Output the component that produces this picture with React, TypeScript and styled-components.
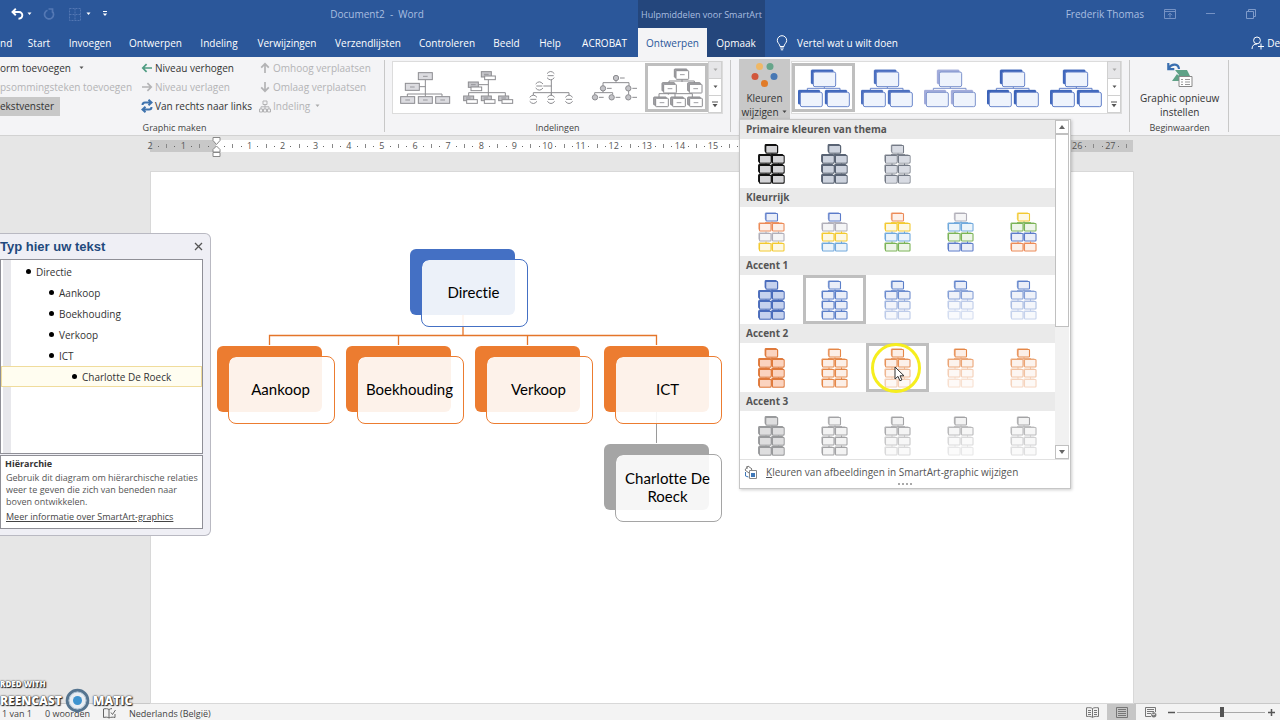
import React from "react";
import styled, { createGlobalStyle } from "styled-components";

const UI = `"Open Sans", "Noto Sans", sans-serif`;

const GlobalStyle = createGlobalStyle`
  *, *::before, *::after { box-sizing: border-box; }
  body { margin: 0; font-family: ${UI}; font-size: 10px; color: #333; overflow: hidden; }
  button { font: inherit; color: inherit; background: none; border: 0; padding: 0; margin: 0; white-space: nowrap; }
  ul { list-style: none; margin: 0; padding: 0; }
  p, h1, h2, h3 { margin: 0; }
  svg { display: block; flex: none; }
`;

/* ---------- application frame ---------- */

const Shell = styled.div`
  display: flex;
  flex-direction: column;
  height: 100vh;
  position: relative;
  overflow: hidden;
`;

const Header = styled.header`
  display: grid;
  grid-template-columns: auto auto 1fr;
  grid-template-rows: 28px 29px;
  background: #2b579a;
  color: #fff;
`;

const TitleArea = styled.div`
  display: flex;
  align-items: center;
  color: #a9bee0;
`;

const QuickAccess = styled.div`
  display: flex;
  align-items: center;
  padding-left: 11px;
  width: 111px;
`;

const DocTitle = styled.h1`
  flex: 1;
  padding-left: 5px;
  font-size: 10px;
  font-weight: 400;
  text-align: center;
`;

const ContextTitle = styled.div`
  display: flex;
  align-items: center;
  justify-content: center;
  background: #24467c;
  color: #a9bee0;
  font-size: 9px;
`;

const WindowArea = styled.div`
  display: flex;
  align-items: center;
  justify-content: flex-end;
  gap: 20px;
  padding-right: 24px;
  color: #a9bee0;
`;

const WindowButtons = styled.div`
  display: flex;
  align-items: center;
  gap: 28px;
`;

const TabList = styled.nav<{ $context?: boolean }>`
  display: flex;
  background: ${(p) => (p.$context ? "#24467c" : "transparent")};
`;

const Tab = styled.button<{ $active?: boolean; $width: number; $cut?: boolean }>`
  width: ${(p) => p.$width}px;
  text-align: ${(p) => (p.$cut ? "left" : "center")};
  background: ${(p) => (p.$active ? "#f4f4f6" : "transparent")};
  color: ${(p) => (p.$active ? "#2b579a" : "#fff")};
`;

const TellArea = styled.div`
  display: flex;
  align-items: center;
  justify-content: space-between;
  padding-left: 11px;
`;

const IconLabel = styled.button`
  display: flex;
  align-items: center;
  gap: 9px;
`;

const ShareButton = styled(IconLabel)`
  gap: 3px;
`;

/* ---------- ribbon ---------- */

const Ribbon = styled.div`
  display: flex;
  height: 79px;
  background: #f4f4f6;
  border-bottom: 1px solid #d2d2d2;
  padding-top: 2px;
  position: relative;
  z-index: 3;
`;

const Group = styled.section<{ $pad: string }>`
  display: flex;
  flex-direction: column;
  justify-content: space-between;
  padding: ${(p) => p.$pad};
  position: relative;
  &::after {
    content: "";
    position: absolute;
    right: 0;
    top: 1px;
    bottom: 3px;
    width: 1px;
    background: #c8c8c8;
  }
`;

const GroupLabel = styled.h2<{ $shift?: number }>`
  font-size: 9px;
  font-weight: 400;
  line-height: 14px;
  text-align: center;
  color: #444;
  padding-right: ${(p) => p.$shift || 0}px;
`;

const GroupBody = styled.div`
  display: flex;
`;

const CommandColumn = styled.div<{ $width: number }>`
  display: flex;
  flex-direction: column;
  align-items: flex-start;
  width: ${(p) => p.$width}px;
`;

const Command = styled.button<{ $muted?: boolean; $pressed?: boolean }>`
  display: flex;
  align-items: center;
  gap: 2px;
  height: 19px;
  padding-bottom: 1px;
  color: ${(p) => (p.$muted ? "#b3b3b5" : "#333")};
  background: ${(p) => (p.$pressed ? "#c8c8c8" : "transparent")};
  padding-right: ${(p) => (p.$pressed ? 6 : 0)}px;
`;

const CommandText = styled.span<{ $gap?: number }>`
  margin-right: ${(p) => p.$gap || 0}px;
`;

const Gallery = styled.div`
  display: flex;
  align-items: center;
  height: 53px;
  margin-top: 2px;
  background: #fff;
  border: 1px solid #dcdcdc;
`;

const Choice = styled.button<{ $selected?: boolean }>`
  display: flex;
  align-items: center;
  justify-content: center;
  width: 63px;
  height: 49px;
  position: relative;
  border: 3px solid ${(p) => (p.$selected ? "#bfbfbf" : "transparent")};
`;

const Stepper = styled.div`
  display: flex;
  flex-direction: column;
  align-self: stretch;
  width: 14px;
`;

const StepButton = styled.button<{ $muted?: boolean }>`
  display: flex;
  align-items: center;
  justify-content: center;
  flex: 1;
  border: 1px solid #d0d0d0;
  margin-top: -1px;
  background: ${(p) => (p.$muted ? "#e6e6e8" : "#fff")};
`;

const BigButton = styled.button<{ $open?: boolean }>`
  display: flex;
  flex-direction: column;
  align-items: center;
  width: ${(p) => (p.$open ? "51px" : "auto")};
  height: 60px;
  padding-top: 3px;
  line-height: 14px;
  background: ${(p) => (p.$open ? "#c8c8c8" : "transparent")};
`;

const BigLine = styled.span`
  display: flex;
  align-items: center;
  gap: 2px;
`;

const BigIcon = styled.span`
  height: 29px;
`;

/* ---------- colour menu ---------- */

const MenuAnchor = styled.div`
  position: relative;
  margin: 0 1px 0 1px;
`;

const Menu = styled.div`
  position: absolute;
  top: 60px;
  left: 0;
  width: 332px;
  background: #fff;
  border: 1px solid #c6c6c6;
  box-shadow: 1px 1px 3px rgba(0, 0, 0, 0.2);
  padding: 0 1px 0 0;
`;

const MenuScroller = styled.div`
  display: flex;
  height: 339px;
`;

const MenuSections = styled.div`
  flex: 1;
  overflow: hidden;
`;

const MenuHeading = styled.h3`
  height: 19px;
  padding-left: 6px;
  background: #eaeaea;
  color: #555;
  font-size: 10px;
  line-height: 19px;
  font-weight: 700;
`;

const SwatchRow = styled.div`
  display: flex;
  height: 49px;
`;

const ScrollBar = styled.div`
  display: flex;
  flex-direction: column;
  width: 14px;
  background: #f1f1f1;
`;

const ScrollPart = styled.button<{ $height?: number; $end?: boolean }>`
  display: flex;
  align-items: center;
  justify-content: center;
  height: ${(p) => p.$height || 14}px;
  margin-top: ${(p) => (p.$end ? "auto" : "0")};
  background: #fff;
  border: 1px solid #c0c0c0;
`;

const MenuFooter = styled.button`
  display: flex;
  align-items: center;
  gap: 9px;
  width: 100%;
  height: 24px;
  padding: 0 0 0 4px;
  color: #555;
  border-top: 1px solid #e1e1e1;
`;

const Grip = styled.div`
  width: 14px;
  height: 5px;
  margin: 0 auto;
  background: radial-gradient(circle at 1px 1px, #aaa 1px, transparent 1px) 0 0 / 4px 6px repeat-x;
`;

const PointerHalo = styled.span`
  position: absolute;
  left: 2px;
  top: -3px;
  width: 50px;
  height: 50px;
  border: 3px solid #f6ee1e;
  border-radius: 50%;
  padding: 20px 0 0 20px;
  z-index: 1;
`;

/* ---------- document area ---------- */

const Workspace = styled.main`
  flex: 1;
  display: flex;
  flex-direction: column;
  min-height: 0;
  position: relative;
  background: #e6e6e6;
`;

const Ruler = styled.div`
  display: flex;
  height: 12px;
  margin: 4px 147px 20px 146px;
  padding-right: 2px;
  font-size: 9px;
  line-height: 12px;
  color: #555;
  background: linear-gradient(
    to right,
    transparent 4px,
    #c8c8c8 4px,
    #c8c8c8 70px,
    #fff 70px,
    #fff calc(100% - 70px),
    #c8c8c8 calc(100% - 70px)
  );
`;

const RulerCell = styled.div<{ $parts: number }>`
  display: flex;
  flex: ${(p) => p.$parts} 1 0;
`;

const RulerMark = styled.span`
  flex: 1 1 0;
  width: 0;
  display: flex;
  justify-content: center;
`;

const RulerTick = styled.i`
  width: 1px;
  height: 4px;
  margin-top: 4px;
  background: #888;
`;

const RulerDot = styled.i`
  width: 1px;
  height: 1px;
  margin-top: 6px;
  background: #666;
`;

const IndentMarker = styled.svg`
  margin-top: -3px;
`;

const Page = styled.article`
  flex: 1;
  margin: 0 147px 0 151px;
  padding: 76px 66px;
  background: #fff;
  outline: 1px solid #d8d8d8;
`;

const Diagram = styled.div`
  position: relative;
  width: 504px;
  height: 274px;
`;

const Node = styled.div<{ $x: number; $y: number; $color: string }>`
  position: absolute;
  left: ${(p) => p.$x}px;
  top: ${(p) => p.$y}px;
  width: 105px;
  height: 66px;
  border-radius: 6px;
  background: ${(p) => p.$color};
`;

const NodeFace = styled.div<{ $color: string }>`
  position: absolute;
  left: 11px;
  top: 10px;
  width: 107px;
  height: 68px;
  padding: 0 2px 2px 0;
  display: flex;
  align-items: center;
  justify-content: center;
  text-align: center;
  border: 1px solid ${(p) => p.$color};
  border-radius: 8px;
  background: rgba(255, 255, 255, 0.9);
  background-clip: padding-box;
  color: #000;
  font-family: Lato, "Open Sans", sans-serif;
  font-variant-ligatures: none;
  font-size: 15px;
  line-height: 18px;
`;

/* ---------- SmartArt text pane ---------- */

const TextPane = styled.aside`
  position: absolute;
  left: 0;
  top: 97px;
  width: 211px;
  padding: 0 7px 6px 0;
  background: #efeff5;
  border: 1px solid #b9b9c2;
  border-left: 0;
  border-radius: 0 6px 6px 0;
`;

const PaneHeader = styled.div`
  display: flex;
  align-items: center;
  justify-content: space-between;
  height: 25px;
`;

const PaneTitle = styled.h2`
  font-family: "Liberation Sans", sans-serif;
  font-size: 13px;
  color: #1f497d;
`;

const Outline = styled.ul`
  height: 195px;
  padding-top: 1px;
  background: linear-gradient(to right, #fff 2px, #e8e8ec 2px, #e8e8ec 10px, #fff 10px);
  border: 1px solid #8f8f96;
`;

const OutlineItem = styled.li<{ $level: number; $active?: boolean }>`
  display: flex;
  align-items: center;
  gap: 5px;
  height: 21px;
  padding-left: ${(p) => 1 + p.$level * 23}px;
  border: 1px solid ${(p) => (p.$active ? "#f0dc9c" : "transparent")};
  background: ${(p) => (p.$active ? "#fffdf0" : "transparent")};
  &::before {
    content: "";
    width: 5px;
    height: 5px;
    border-radius: 50%;
    background: #000;
  }
`;

const PaneInfo = styled.div`
  height: 74px;
  margin-top: 1px;
  padding: 2px 4px;
  background: #fff;
  border: 1px solid #8f8f96;
  font-size: 9px;
  line-height: 12px;
  color: #555;
`;

const InfoTitle = styled.h3`
  font-size: 9px;
  line-height: 12px;
  color: #333;
  margin-bottom: 2px;
`;

const InfoText = styled.p`
  padding-left: 1px;
`;

const InfoLink = styled.a`
  display: inline-block;
  margin: 3px 0 0 1px;
  color: #444;
  text-decoration: underline;
`;

/* ---------- status bar ---------- */

const StatusBar = styled.footer`
  display: flex;
  align-items: stretch;
  justify-content: space-between;
  height: 17px;
  background: #f3f3f3;
  border-top: 1px solid #c8c8c8;
  font-size: 9px;
  color: #444;
`;

const StatusSide = styled.div<{ $gap: number }>`
  display: flex;
  align-items: center;
  gap: ${(p) => p.$gap}px;
  padding: 2px 3px 0 2px;
`;

const ViewSide = styled(StatusSide)`
  padding-top: 0;
`;

const ViewButton = styled.button<{ $active?: boolean }>`
  display: flex;
  align-items: center;
  justify-content: center;
  align-self: stretch;
  width: 29px;
  background: ${(p) => (p.$active ? "#c6c6c6" : "transparent")};
`;

const ZoomButton = styled.button`
  display: flex;
  align-items: center;
  justify-content: center;
  width: 12px;
  height: 12px;
`;

const ZoomSlider = styled.input`
  appearance: none;
  width: 88px;
  height: 12px;
  margin: 0;
  background: linear-gradient(#a8a8a8, #a8a8a8) center / 100% 1px no-repeat;
  &::-webkit-slider-thumb {
    appearance: none;
    width: 4px;
    height: 10px;
    background: #555;
  }
`;

const Watermark = styled.div`
  position: absolute;
  left: 0;
  bottom: 7px;
  z-index: 5;
  color: #fff;
  font-family: "Open Sans", sans-serif;
  font-weight: 800;
  text-shadow: 1px 1px 1px #222, 0 0 2px #333, 0 0 1px #333;
`;

const MarkSmall = styled.div`
  font-size: 8px;
  line-height: 10px;
`;

const MarkLarge = styled.div`
  display: flex;
  align-items: center;
  gap: 3px;
  height: 26px;
  margin-top: -2px;
  font-size: 12px;
`;

/* ---------- drawings ---------- */

const Caret = ({ color = "#555" }: { color?: string }) => (
  <svg width="11" height="4" viewBox="0 0 11 4"><path d="M3.5 .5h4L5.5 3z" fill={color} /></svg>
);

const Up = () => <svg width="8" height="6" viewBox="0 0 8 6"><path d="M1 5h6L4 1z" fill="#666" /></svg>;
const Down = () => <svg width="8" height="6" viewBox="0 0 8 6"><path d="M1 1h6L4 5z" fill="#666" /></svg>;

const Arrow = ({ turn, color }: { turn: number; color: string }) => (
  <svg width="12" height="12" viewBox="0 0 12 12">
    <path transform={`rotate(${turn} 6 6)`} d="M11 6H2M5.6 2.2 1.8 6l3.8 3.8" fill="none" stroke={color} strokeWidth="1.7" />
  </svg>
);

const SwapIcon = () => (
  <svg width="12" height="14" viewBox="0 0 12 14">
    <path d="M1.5 6C1.500 4 2.500 3.500 4 3.500h6.500M7.500 .8l3 2.700-3 2.700" fill="none" stroke="#3f73ad" strokeWidth="2" />
    <path d="M10.500 8c0 2-1 2.500-2.500 2.500H1.500M4.500 7.800l-3 2.700 3 2.700" fill="none" stroke="#3f73ad" strokeWidth="2" />
  </svg>
);

const TreeIcon = () => (
  <svg width="12" height="13" viewBox="0 0 12 13" fill="none" stroke="#b3b3b5">
    <path d="M4 1h4v3.500H4zM.5 9h3v3h-3zM4.500 9h3v3h-3zM8.500 9h3v3h-3zM6 4.500V9M2 9V6.800h8V9" />
  </svg>
);

type Rect = [number, number, number, number];
const Boxes = ({ list, fill, stroke, width = 3, r = 2 }: { list: Rect[]; fill: string; stroke: string; width?: number; r?: number }) => (
  <>
    {list.map(([x, y, w, h], i) => (
      <rect key={i} x={x} y={y} width={w} height={h} rx={r} fill={fill} stroke={stroke} strokeWidth={width} />
    ))}
  </>
);

const G = "#8c8c90";
const Dashes = ({ at }: { at: [number, number][] }) => (
  <path d={at.map(([x, y]) => `M${x - 7} ${y}h14`).join("")} stroke={G} strokeWidth="2.500" fill="none" />
);

const layoutArt = [
  <>
    <path d="M79 35v50M61 56h18M25 86v-8h104v8" fill="none" stroke={G} strokeWidth="3" />
    <Boxes list={[[58, 14, 42, 21], [19, 46, 42, 21], [5, 86, 42, 20], [58, 86, 42, 20], [110, 86, 42, 20]]} fill="#dcdce0" stroke={G} r={0} />
    <Dashes at={[[79, 25], [40, 57], [26, 96], [79, 96], [131, 96]]} />
  </>,
  <>
    <path d="M79 24v60M50 50h29M20 84v-10h110v10" fill="none" stroke={G} strokeWidth="3" />
    <Boxes list={[[58, 11, 30, 16], [19, 42, 30, 16], [5, 84, 30, 14], [58, 84, 30, 14], [110, 84, 30, 14]]} fill="#c4c4c8" stroke={G} r={0} />
    <Boxes list={[[68, 24, 32, 11], [27, 57, 32, 11], [14, 95, 32, 11], [67, 95, 32, 11], [120, 95, 32, 11]]} fill="#fff" stroke={G} r={0} />
    <Dashes at={[[73, 19], [34, 50], [19, 90], [72, 90], [125, 90]]} />
  </>,
  <>
    <path d="M79 36v46M55 54h24M25 82v-8h107v8M79 74v8" fill="none" stroke={G} strokeWidth="3" />
    {([[77, 23], [43, 54], [25, 94], [78, 94], [132, 94]] as [number, number][]).map(([x, y], i) => (
      <path key={i} d={`M${x - 11} ${y - 6}q11-13 22 0M${x - 11} ${y + 6}q11 13 22 0M${x - 9} ${y}h18`} fill="none" stroke={G} strokeWidth="3" />
    ))}
  </>,
  <>
    <path d="M84 38v6M45 54V44h78v10M45 68v6M20 80v-6h54v6M122 68v12" fill="none" stroke={G} strokeWidth="3" />
    {([[84, 30], [45, 61], [121, 61], [21, 88], [71, 88], [121, 88]] as [number, number][]).map(([x, y], i) => (
      <g key={i} stroke={G} strokeWidth="3"><circle cx={x} cy={y} r="8" fill="#c4c4c8" /><path d={`M${x + 12} ${y}h14`} /></g>
    ))}
  </>,
  <>
    <path d="M93 34v8M54 46v-7h76v7M24 87v-10h100v10M72 77v10M52 76v4" fill="none" stroke={G} strokeWidth="3" />
    <Boxes list={[[70, 3, 38, 25], [33, 44, 38, 25], [110, 44, 38, 25], [8, 87, 38, 24], [59, 87, 38, 24], [110, 87, 38, 24]]} fill="#a4a4a8" stroke={G} />
    <Boxes list={[[75, 8, 38, 26], [38, 49, 38, 26], [115, 49, 38, 26], [14, 91, 38, 25], [65, 91, 38, 25], [116, 91, 38, 25]]} fill="#fff" stroke={G} />
    <Dashes at={[[94, 20], [57, 62], [134, 62], [33, 104], [84, 104], [135, 104]]} />
  </>,
];

const StyleArt = ({ back, line }: { back: string; line: string }) => (
  <svg width="52" height="40" viewBox="2 2 156 120">
    <path d="M81 58v5M30 68v-5h98v5" fill="none" stroke={line} strokeWidth="3" />
    <Boxes list={[[41, 7, 67, 43], [2, 68, 66, 43], [83, 68, 66, 43]]} fill={back} stroke={back} r={4} width={1} />
    <Boxes list={[[48, 14, 67, 44], [9, 75, 66, 43], [90, 75, 66, 43]]} fill="#eef3fc" stroke={line} r={5} />
  </svg>
);

interface Swatch { edge: string[]; fill: string; heavy?: boolean; fade?: number[] }

const SwatchArt = ({ edge, fill, heavy, fade = [1, 1, 1, 1] }: Swatch) => {
  const rows: [number, number[]][] = [[2.5, [8]], [12.5, [1.5, 14.5]], [22.5, [1.5, 14.5]], [32.5, [1.5, 14.5]]];
  return (
    <svg width="28" height="42" viewBox="0 0 28 42">
      {rows.map(([y, xs], r) => {
        const c = edge[r % edge.length];
        return (
          <g key={r} opacity={fade[r]} stroke={c}>
            {r === 1 && <path d="M7 11.700h14M14 10.500v1.500" fill="none" />}
            {r > 1 && <path d={`M8 ${y - 2}v2M20.500 ${y - 2}v2`} fill="none" />}
            {xs.map((x) => (
              <g key={x}>
                <rect x={x - 0.8} y={y - 0.8} width="11" height="7" rx=".8" fill={c} strokeWidth={heavy ? 1.2 : 0.4} fillOpacity={heavy ? 1 : 0.7} />
                <rect x={x} y={y} width="11.500" height="7.500" rx=".8" fill="#fff" strokeWidth={heavy ? 1.4 : 1.1} />
                <rect x={x + 0.5} y={y + 0.5} width="10.500" height="6.500" rx=".6" fill={fill === "tint" ? c : fill} fillOpacity={fill === "tint" ? 0.13 : 1} stroke="none" />
              </g>
            ))}
          </g>
        );
      })}
    </svg>
  );
};

const B = "#5b7bc9", O = "#ec8a57", A = "#b0aeb8", Y = "#f3c92f", L = "#6fa8dc", V = "#7ab356";

const accent = (c: string, deep: string, fill: string): Swatch[] => [
  { edge: [deep], fill, heavy: true },
  { edge: [c], fill: "tint" },
  { edge: [c], fill: "tint", fade: [1, 0.9, 0.6, 0.4] },
  { edge: [c], fill: "tint", fade: [1, 0.75, 0.4, 0.25] },
  { edge: [c], fill: "tint", fade: [1, 0.75, 0.5, 0.35] },
];

const menuData: { title: string; items: Swatch[]; selected?: number; hovered?: number }[] = [
  {
    title: "Primaire kleuren van thema",
    items: [
      { edge: ["#111"], fill: "#d3d3d6", heavy: true },
      { edge: ["#5a6474"], fill: "#cdd3de", heavy: true },
      { edge: ["#747a86"], fill: "#d8dbe3" },
    ],
  },
  {
    title: "Kleurrijk",
    items: [
      { edge: [B, O, A, Y], fill: "tint" },
      { edge: [B, A, Y, L], fill: "tint" },
      { edge: [O, Y, L, V], fill: "tint" },
      { edge: [A, L, V, B], fill: "tint" },
      { edge: [Y, V, B, O], fill: "tint" },
    ],
  },
  { title: "Accent 1", items: accent("#5b7fc9", "#4a6cbb", "#c6d2ee"), selected: 1 },
  { title: "Accent 2", items: accent("#e58748", "#df7a3c", "#fbd3bf"), hovered: 2 },
  { title: "Accent 3", items: accent("#a3a3a5", "#999a9c", "#dededf") },
];

const Pointer = () => (
  <svg width="12" height="17" viewBox="0 0 12 17">
    <path d="M1 1v12l3-2.600 1.900 4.400 2-.9L6 9.800h4z" fill="#fff" stroke="#333" strokeWidth="1" />
  </svg>
);

/* ---------- data ---------- */

const tabs: [string, number][] = [
  ["nd", 19], ["Start", 40], ["Invoegen", 62], ["Ontwerpen", 69], ["Indeling", 58], ["Verwijzingen", 78],
  ["Verzendlijsten", 84], ["Controleren", 74], ["Beeld", 45], ["Help", 42], ["ACROBAT", 67],
];

const rulerNumbers = ["2", "1", "", ...Array.from({ length: 27 }, (_, i) => String(i + 1))];

const outline: [string, number][] = [
  ["Directie", 1], ["Aankoop", 2], ["Boekhouding", 2], ["Verkoop", 2], ["ICT", 2], ["Charlotte De Roeck", 3],
];

const nodes = [
  { text: "Directie", x: 193, y: 1, color: "#4470c4" },
  { text: "Aankoop", x: 0, y: 98, color: "#ec7c30" },
  { text: "Boekhouding", x: 129, y: 98, color: "#ec7c30" },
  { text: "Verkoop", x: 258, y: 98, color: "#ec7c30" },
  { text: "ICT", x: 387, y: 98, color: "#ec7c30" },
  { text: "Charlotte De Roeck", x: 387, y: 196, color: "#a5a5a5" },
];

const galleryStyles = [
  { back: "#4068bd", line: "#6a86cb" },
  { back: "#4b6fc0", line: "#6a86cb" },
  { back: "#a3addb", line: "#7c92cc" },
  { back: "#3a62b8", line: "#6a86cb" },
  { back: "#4068bd", line: "#5f7ec8" },
];

const GalleryStepper = () => (
  <Stepper>
    <StepButton $muted aria-label="Vorige rij"><Caret color="#aaa" /></StepButton>
    <StepButton aria-label="Volgende rij"><Caret /></StepButton>
    <StepButton aria-label="Meer">
      <svg width="8" height="7" viewBox="0 0 8 7"><path d="M1 .5h6v1H1zM1.500 3h5L4 6.200z" fill="#555" /></svg>
    </StepButton>
  </Stepper>
);

export default function App() {
  return (
    <Shell>
      <GlobalStyle />
      <Header>
        <TitleArea>
          <QuickAccess>
            <IconLabel aria-label="Ongedaan maken">
              <svg width="13" height="12" viewBox="0 0 13 12"><path d="M4.800 .8 1.500 4l3.300 3.200M2 4h6c4.500 0 4.500 6.500-.5 6.800" fill="none" stroke="#fff" strokeWidth="1.900" /></svg>
            </IconLabel>
            <Caret color="#fff" />
            <svg width="29" height="12" viewBox="0 0 29 12"><path d="M12.500 2.200A4.500 4.500 0 1 0 17 3M13.500 1h4v4" fill="none" stroke="#5478b4" strokeWidth="1.700" /></svg>
            <svg width="19" height="13" viewBox="0 0 19 13"><path d="M5.500 .5h11v12h-11zM5.500 6.500h11M11 .5v12" fill="none" stroke="#5276b2" strokeDasharray="2 1" /></svg>
            <Caret color="#fff" />
            <svg width="20" height="8" viewBox="0 0 20 8"><path d="M9 1h4v1H9zM8.800 3.500h4.400L11 6z" fill="#fff" /></svg>
          </QuickAccess>
          <DocTitle>Document2 &nbsp;-&nbsp; Word</DocTitle>
        </TitleArea>
        <ContextTitle>Hulpmiddelen voor SmartArt</ContextTitle>
        <WindowArea>
          <span>Frederik Thomas</span>
          <WindowButtons>
            <button aria-label="Weergaveopties voor lint">
              <svg width="12" height="10" viewBox="0 0 12 10"><path d="M.5 .5h11v9H.5zM.5 2.500h11M6 8.500v-4M4 6.200l2-2 2 2" fill="none" stroke="#7592c4" /></svg>
            </button>
            <button aria-label="Minimaliseren">
              <svg width="14" height="10" viewBox="0 0 14 10"><path d="M2 4.500h9" stroke="#7592c4" /></svg>
            </button>
            <button aria-label="Verkleinen">
              <svg width="10" height="10" viewBox="0 0 10 10"><path d="M.5 2.500h7v7h-7zM2.500 2.500v-2h7v7h-2" fill="none" stroke="#7f9bca" /></svg>
            </button>
          </WindowButtons>
        </WindowArea>
        <TabList>
          {tabs.map(([t, w], i) => <Tab key={t} $width={w} $cut={i === 0}>{t}</Tab>)}
        </TabList>
        <TabList $context>
          <Tab $active $width={69}>Ontwerpen</Tab>
          <Tab $width={58}>Opmaak</Tab>
        </TabList>
        <TellArea>
          <IconLabel>
            <svg width="12" height="16" viewBox="0 0 12 16"><path d="M4 11.500C4 9 1.300 8.200 1.300 5.400a4.700 4.700 0 0 1 9.400 0C10.700 8.200 8 9 8 11.500zM4.200 13h3.600M4.800 14.800h2.400" fill="none" stroke="#fff" /></svg>
            Vertel wat u wilt doen
          </IconLabel>
          <ShareButton>
            <svg width="13" height="14" viewBox="0 0 13 14"><path d="M6 1a3.300 3.300 0 1 1 0 6.800A3.300 3.300 0 0 1 6 1M1 13c0-3.500 2-5 5-5M10 7.500v6M7 10.500h6" fill="none" stroke="#fff" /></svg>
            De
          </ShareButton>
        </TellArea>
      </Header>

      <Ribbon>
        <Group $pad="0 4px 0 0">
          <GroupBody>
            <CommandColumn $width={141}>
              <Command><CommandText $gap={3}>orm toevoegen</CommandText><Caret /></Command>
              <Command $muted>psommingsteken toevoegen</Command>
              <Command $pressed>ekstvenster</Command>
            </CommandColumn>
            <CommandColumn $width={118}>
              <Command><Arrow turn={0} color="#4f9c82" />Niveau verhogen</Command>
              <Command $muted><Arrow turn={180} color="#b3b3b5" />Niveau verlagen</Command>
              <Command><SwapIcon />Van rechts naar links</Command>
            </CommandColumn>
            <CommandColumn $width={122}>
              <Command $muted><Arrow turn={90} color="#b3b3b5" />Omhoog verplaatsen</Command>
              <Command $muted><Arrow turn={270} color="#b3b3b5" />Omlaag verplaatsen</Command>
              <Command $muted><TreeIcon />Indeling<Caret color="#aaa" /></Command>
            </CommandColumn>
          </GroupBody>
          <GroupLabel $shift={32}>Graphic maken</GroupLabel>
        </Group>

        <Group $pad="0 8px 0 7px">
          <Gallery>
            {layoutArt.map((art, i) => (
              <Choice key={i} $selected={i === 4} aria-label={`Indeling ${i + 1}`}>
                <svg width="52" height="40" viewBox="0 0 156 120">{art}</svg>
              </Choice>
            ))}
            <GalleryStepper />
          </Gallery>
          <GroupLabel>Indelingen</GroupLabel>
        </Group>

        <Group $pad="0 8px 0 7px">
          <GroupBody>
            <MenuAnchor>
              <BigButton $open>
                <BigIcon>
                  <svg width="27" height="27" viewBox="0 0 27 27">
                    <circle cx="8.500" cy="4.500" r="3.500" fill="#efb866" /><circle cx="19" cy="4.500" r="3.500" fill="#66a58a" />
                    <circle cx="4" cy="14.500" r="3.500" fill="#d1573d" /><circle cx="23" cy="14.500" r="3.500" fill="#4878b4" />
                    <circle cx="13.500" cy="21.500" r="3.500" fill="#e17b28" />
                  </svg>
                </BigIcon>
                <BigLine>Kleuren</BigLine>
                <BigLine>wijzigen<svg width="7" height="4" viewBox="0 0 7 4"><path d="M1.500 .5h4L3.500 3z" fill="#444" /></svg></BigLine>
              </BigButton>
              <Menu>
                <MenuScroller>
                  <MenuSections>
                    {menuData.map((s) => (
                      <section key={s.title}>
                        <MenuHeading>{s.title}</MenuHeading>
                        <SwatchRow>
                          {s.items.map((it, i) => (
                            <Choice key={i} $selected={i === s.selected || i === s.hovered} aria-label={`${s.title} ${i + 1}`}>
                              <SwatchArt {...it} />
                              {i === s.hovered && <PointerHalo><Pointer /></PointerHalo>}
                            </Choice>
                          ))}
                        </SwatchRow>
                      </section>
                    ))}
                  </MenuSections>
                  <ScrollBar>
                    <ScrollPart aria-label="Omhoog"><Up /></ScrollPart>
                    <ScrollPart $height={193} aria-label="Schuifblok" />
                    <ScrollPart $end aria-label="Omlaag"><Down /></ScrollPart>
                  </ScrollBar>
                </MenuScroller>
                <MenuFooter>
                  <svg width="13" height="14" viewBox="0 0 13 14">
                    <path d="M1 5l3-4 4 3-3 4zM3 1v3" fill="#fff" stroke="#777" />
                    <path d="M5.500 5.500h7v8h-7z" fill="#fff" stroke="#888" /><path d="M7 8h4v4H7z" fill="#3f78b8" /><path d="M1.500 7v4l3 1" fill="none" stroke="#3f78b8" />
                  </svg>
                  <span><u>K</u>leuren van afbeeldingen in SmartArt-graphic wijzigen</span>
                </MenuFooter>
                <Grip />
              </Menu>
            </MenuAnchor>
            <Gallery>
              {galleryStyles.map((s, i) => (
                <Choice key={i} $selected={i === 0} aria-label={`Stijl ${i + 1}`}>
                  <StyleArt {...s} />
                </Choice>
              ))}
              <GalleryStepper />
            </Gallery>
          </GroupBody>
        </Group>

        <Group $pad="0 10px 0 10px">
          <BigButton>
            <BigIcon>
              <svg width="26" height="26" viewBox="0 0 26 26">
                <path d="M8 8h12l4 8H8l4-3zM5 19l5-7 6 7z" fill="#5fa287" />
                <path d="M12 14.500h13v10H12z" fill="#fff" stroke="#888" /><path d="M14 17.500h2M18 17.500h5M14 20h2M18 20h5M14 22.500h2M18 22.500h5" stroke="#999" />
                <path d="M12 7C11.500 1.500 5 1 1.800 6M1.300 1v6.200h6" fill="none" stroke="#3a6fb0" strokeWidth="2.200" />
              </svg>
            </BigIcon>
            <BigLine>Graphic opnieuw</BigLine>
            <BigLine>instellen</BigLine>
          </BigButton>
          <GroupLabel>Beginwaarden</GroupLabel>
        </Group>
      </Ribbon>

      <Workspace>
        <Ruler>
          {rulerNumbers.map((n, i) => {
            const last = i === rulerNumbers.length - 1;
            return (
              <RulerCell key={i} $parts={last ? 3 : 4}>
                <RulerMark>
                  {n || (
                    <IndentMarker width="9" height="21" viewBox="0 0 9 21">
                      <path d="M1 .5h7v3L4.500 7.500 1 3.500zM1 15v-2.500L4.500 9 8 12.500V15zM1 15.500h7v4H1z" fill="#fff" stroke="#888" />
                    </IndentMarker>
                  )}
                </RulerMark>
                <RulerMark><RulerDot /></RulerMark>
                <RulerMark><RulerTick /></RulerMark>
                {!last && <RulerMark><RulerDot /></RulerMark>}
              </RulerCell>
            );
          })}
        </Ruler>

        <Page>
          <Diagram>
            <svg width="504" height="274" viewBox="0 0 504 274" fill="none">
              <path d="M246 66v22M52.500 97v-9.500h387V97M181.500 87.500V97M310.500 87.500V97" stroke="#e4752a" strokeWidth="1.300" />
              <path d="M439.500 164v31" stroke="#9a9a9a" />
            </svg>
            {nodes.map((n) => (
              <Node key={n.text} $x={n.x} $y={n.y} $color={n.color}>
                <NodeFace $color={n.color}>{n.text}</NodeFace>
              </Node>
            ))}
          </Diagram>
        </Page>

        <TextPane>
          <PaneHeader>
            <PaneTitle>Typ hier uw tekst</PaneTitle>
            <button aria-label="Sluiten">
              <svg width="9" height="9" viewBox="0 0 9 9"><path d="M1 1l7 7M8 1L1 8" stroke="#555" strokeWidth="1.300" /></svg>
            </button>
          </PaneHeader>
          <Outline>
            {outline.map(([t, l]) => <OutlineItem key={t} $level={l} $active={l === 3}>{t}</OutlineItem>)}
          </Outline>
          <PaneInfo>
            <InfoTitle>Hiërarchie</InfoTitle>
            <InfoText>Gebruik dit diagram om hiërarchische relaties weer te geven die zich van beneden naar boven ontwikkelen.</InfoText>
            <InfoLink href="#info">Meer informatie over SmartArt-graphics</InfoLink>
          </PaneInfo>
        </TextPane>
      </Workspace>

      <StatusBar>
        <StatusSide $gap={13}>
          <span>1 van 1</span>
          <span>0 woorden</span>
          <svg width="13" height="11" viewBox="0 0 13 11"><path d="M6 1.500C4.500 .5 2.500 .5 .5 1v8.500c2-.5 4-.5 5.500.5zM6 1.500C7 .8 8 .6 9 .6M6 10c2-1 4-1 6-.5V6M8 4.500l1.500 2L12.500 2" fill="none" stroke="#666" /></svg>
          <span>Nederlands (België)</span>
        </StatusSide>
        <ViewSide $gap={0}>
          <ViewButton aria-label="Leesmodus">
            <svg width="13" height="11" viewBox="0 0 13 11"><path d="M6.500 1.500C5 .5 3 .5 .5 .8v8.700c2.500-.3 4.500 0 6 .8 1.500-.8 3.500-1.100 6-.8V.8C10 .5 8 .5 6.500 1.500zM6.500 1.500v9M2 3.500h3M2 5.500h3M2 7.500h3M8 3.500h3M8 5.500h3M8 7.500h3" fill="none" stroke="#777" /></svg>
          </ViewButton>
          <ViewButton $active aria-label="Afdrukweergave">
            <svg width="12" height="11" viewBox="0 0 12 11"><path d="M.5 .5h11v10H.5zM2 2.500h8M2 4.500h8M2 6.500h8M2 8.500h8" fill="none" stroke="#777" /></svg>
          </ViewButton>
          <ViewButton aria-label="Weblay-out">
            <svg width="12" height="11" viewBox="0 0 12 11"><path d="M6 9.500H.5v-9h10V5M2 2.500h7M2 4.500h7M2 6.500h4" fill="none" stroke="#777" /><circle cx="8.800" cy="7.800" r="2.600" fill="#777" /><path d="M7 7l2 1 1-1.500" stroke="#eee" fill="none" /></svg>
          </ViewButton>
          <ZoomButton aria-label="Uitzoomen">
            <svg width="7" height="7" viewBox="0 0 7 7"><path d="M0 3.500h7" stroke="#555" strokeWidth="1.500" /></svg>
          </ZoomButton>
          <ZoomSlider type="range" min={0} max={100} defaultValue={51} aria-label="Zoomen" />
          <ZoomButton aria-label="Inzoomen">
            <svg width="7" height="7" viewBox="0 0 7 7"><path d="M0 3.500h7M3.500 0v7" stroke="#555" strokeWidth="1.500" /></svg>
          </ZoomButton>
        </ViewSide>
      </StatusBar>

      <Watermark>
        <MarkSmall>RDED WITH</MarkSmall>
        <MarkLarge>
          REENCAST
          <svg width="25" height="25" viewBox="0 0 25 25">
            <circle cx="12.500" cy="12.500" r="10.300" fill="#e8edf2" stroke="#55748f" strokeWidth="3" />
            <circle cx="12.500" cy="12.500" r="8.500" fill="none" stroke="#a9c0d2" strokeWidth="1" />
            <circle cx="12.500" cy="12.500" r="4.500" fill="#3d93cf" />
          </svg>
          MATIC
        </MarkLarge>
      </Watermark>
    </Shell>
  );
}
